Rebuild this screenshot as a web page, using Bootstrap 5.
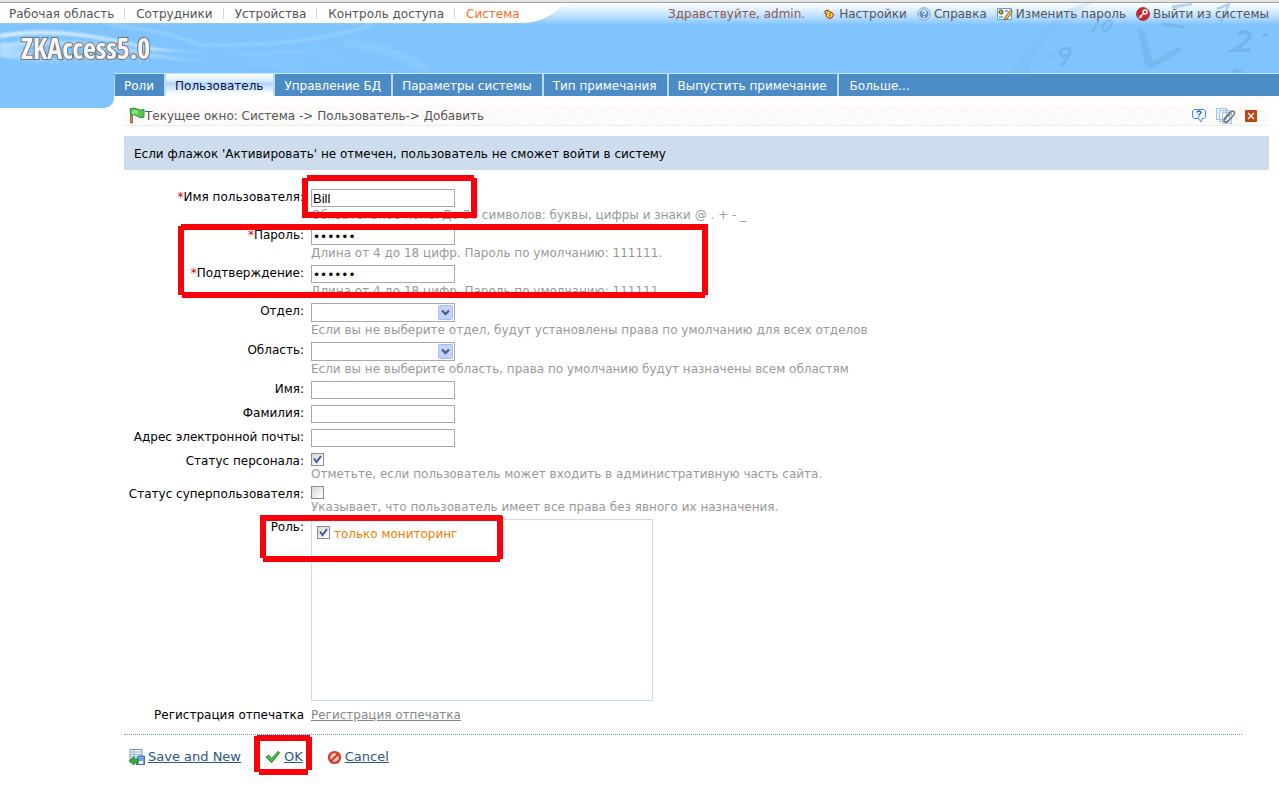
<!DOCTYPE html>
<html lang="ru">
<head>
<meta charset="utf-8">
<meta name="viewport" content="width=device-width, initial-scale=1">
<title>ZKAccess5.0</title>
<link href="https://cdn.jsdelivr.net/npm/bootstrap@5.3.0/dist/css/bootstrap.min.css" rel="stylesheet">
<style>
  body { font: 12px/16px "DejaVu Sans", sans-serif; color: #000; background: #fff; }
  a { color: inherit; text-decoration: none; }
  .chrome-edge { height: 3px; background: #e4e4e4; border-bottom: 1px solid #a0a0a0; }
  .masthead { position: relative; height: 93px; background: linear-gradient(#fff, #c4e3ff 12px, #7fc4ff 22px, #7fc4ff); }
  .masthead > svg { position: absolute; top: 0; }
  .art-waves { left: 0; }
  .art-clock { right: 0; }
  .topbar { position: relative; height: 22px; color: #555; }
  .mainnav { background: #fff; height: 20px; padding-left: 9px; }
  .mainnav a { line-height: 22px; }
  .mainnav li + li::before { content: ""; display: inline-block; width: 1px; height: 11px; background: #d4d4d4; margin: 0 11px 0 10px; vertical-align: -1px; }
  .mainnav .current { color: #f4712a; }
  .usernav { gap: 10px; padding-right: 10px; line-height: 22px; }
  .usernav a { display: flex; align-items: center; gap: 3px; }
  .hello { color: #93584d; margin-right: 8px; }
  .product { position: relative; margin-left: 21px; padding-top: 8px; font: bold 28px/30px "Open Sans Condensed", "Liberation Sans", sans-serif; color: #f6f6f6; -webkit-text-stroke: 2px #777; paint-order: stroke fill; -webkit-box-reflect: below -14px linear-gradient(transparent 55%, rgba(0,0,0,.35)); }
  .tabs-row { position: absolute; left: 0; right: 0; bottom: 0; padding-left: 114px; }
  .tabs { flex: 1; background: #4c8cc6; height: 23px; border-top: 1px solid #c6e6ff; }
  .tabs a { display: block; height: 22px; line-height: 24px; padding: 0 10px 0 9px; color: #fff; border-right: 2px solid #b5dcfb; }
  .tabs li:first-child a { border-left: 1px solid #b5dcfb; border-top-left-radius: 3px; }
  .tabs li:last-child a { border-right: 0; padding-left: 11px; }
  .tabs .current { color: #101040; background: linear-gradient(#fff, #cfe7fb 8px, #a9d4fa 9px, #fff 20px); }
  .notch { width: 114px; height: 12px; background: #7fc4ff; border-bottom-right-radius: 10px; }
  .content-area { margin: -2px 10px 0 124px; }
  .crumbs { height: 20px; color: #555; border-bottom: 1px solid #eee; background: repeating-linear-gradient(45deg, #fff 0 1px, #fbf6f4 1px 2px); padding-left: 5px; padding-right: 12px; }
  .tip { margin-top: 10px; background: #cddded; padding: 10px; height: 34px; }
  .form-body { padding-top: 19px; }
  .entry { display: grid; grid-template-columns: 180px 1fr; column-gap: 7px; margin-bottom: 4px; }
  .entry.tight { margin-bottom: 6px; }
  .entry > label, .entry > .caption { text-align: right; white-space: nowrap; }
  .req { color: #d00; }
  .field { display: block; width: 144px; height: 18px; border: 1px solid #a9a9ab; border-radius: 0; padding: 1px 1px 0; font: 13px/15px "Liberation Sans", sans-serif; color: #000; background: #fff; }
  .field[type=password] { font: 12px/15px "DejaVu Sans", sans-serif; }
  select.field { height: 19px; appearance: none; background: #fff url("data:image/svg+xml,%3Csvg xmlns='http://www.w3.org/2000/svg' width='15' height='15'%3E%3Crect x='.5' y='.5' width='14' height='14' rx='1' fill='%23c3d3fb' stroke='%23aabdf0'/%3E%3Cpath d='M4 5.5 7.5 9 11 5.5' fill='none' stroke='%234d6185' stroke-width='2.4'/%3E%3C/svg%3E") right 1px center no-repeat; }
  .hint { color: #999; }
  .tick { display: block; appearance: none; width: 13px; height: 13px; margin: 0; border: 1px solid #8d8d8d; background: linear-gradient(135deg, #d7d7d4, #fff); }
  .tick:checked { background: url("data:image/svg+xml,%3Csvg xmlns='http://www.w3.org/2000/svg' width='11' height='11'%3E%3Cpath d='M2 4.5 4.5 8 9 2' fill='none' stroke='%23405aa5' stroke-width='2'/%3E%3C/svg%3E") center no-repeat, linear-gradient(135deg, #d7d7d4, #fff); }
  .role-list { width: 342px; height: 182px; border: 1px solid #c5def0; padding: 6px 5px; color: #f08000; }
  .finger-link { color: #888; text-decoration: underline; }
  .rule { margin: 11px 27px 0 0; border-top: 1px dotted #6c93bb; }
  .actions { padding: 12px 5px; color: #2d5685; }
  .actions button { display: flex; align-items: center; gap: 3px; padding: 0; border: 0; background: none; color: inherit; font-size: 13px; line-height: 20px; }
  .actions u { text-underline-offset: 1px; }
  .marker { position: absolute; overflow: visible; pointer-events: none; z-index: 2; fill: none; stroke: #fe000c; stroke-width: 6px; }
  .mark-name { left: 178px; top: -15px; }
  .mark-pass { left: 54px; top: -2px; }
  .mark-role { left: 136px; top: -4px; }
  .mark-ok { left: -11px; top: -13px; }
</style>
</head>
<body>
<div class="chrome-edge"></div>
<header class="masthead">
  <svg class="art-waves" width="440" height="70" viewBox="0 0 440 70" fill="none" aria-hidden="true">
    <defs>
      <linearGradient id="fade"><stop offset="0" stop-color="#fff" stop-opacity=".7"/><stop offset=".5" stop-color="#fff" stop-opacity=".45"/><stop offset="1" stop-color="#fff" stop-opacity="0"/></linearGradient>
      <filter id="soft"><feGaussianBlur stdDeviation="1.2"/></filter>
    </defs>
    <g filter="url(#soft)">
      <path d="M0 31Q60 20 145 43Q240 60 380 41Q260 56 150 47Q60 24 0 35Z" fill="url(#fade)"/>
      <path d="M0 40Q80 32 150 50Q250 72 390 54Q260 68 150 54Q70 36 0 46Z" fill="url(#fade)" opacity=".6"/>
      <path d="M0 46Q20 40 60 60Q30 58 0 54Z" fill="url(#fade)" opacity=".6"/>
      <path d="M110 22Q170 28 200 42Q310 44 370 22" stroke="#fff" stroke-opacity=".16" stroke-width="3"/>
      <path d="M345 40Q395 44 425 66" stroke="#fff" stroke-opacity=".08" stroke-width="8"/>
    </g>
  </svg>
  <svg class="art-clock" width="270" height="70" viewBox="1009 3 270 70" aria-hidden="true">
    <path d="M1011 73Q1040 20 1082 3H1094Q1045 25 1027 73Z" fill="#6faedf" opacity=".15"/>
    <g fill="none" stroke="#659fce" stroke-width="3" opacity=".4">
      <path d="M1049 56h4M1070 52Q1061 60 1060 53Q1062 46 1070 49Q1072 56 1060 66M1099 20 1092 32M1108 21Q1115 19 1110 27Q1104 34 1102 28Q1103 22 1108 21M1217 9 1229 4 1221 22" stroke-width="2.500"/>
      <path d="M1238 34Q1244 30 1250 34Q1252 39 1234 50H1250" stroke-width="4"/><path d="M1262 35h6M1162 24l22 3M1172 7l20-3M1233 70l9 2"/>
    </g>
    <path d="M1137 28 1144 31 1153 61 1180 46 1182 51 1153 68 1146 67Z" fill="#659fce" opacity=".3"/>
  </svg>
  <div class="topbar d-flex justify-content-between">
    <nav class="d-flex">
      <ul class="mainnav list-unstyled d-flex mb-0 text-nowrap">
        <li><a href="#">Рабочая область</a></li><li><a href="#">Сотрудники</a></li><li><a href="#">Устройства</a></li><li><a href="#">Контроль доступа</a></li><li><a href="#" class="current">Система</a></li>
      </ul>
      <svg width="44" height="20" aria-hidden="true"><path d="M0 0H44Q28 20 0 20Z" fill="#fff"/></svg>
    </nav>
    <div class="usernav d-flex text-nowrap">
      <span class="hello">Здравствуйте, admin.</span>
      <a href="#"><svg width="13" height="12" viewBox="0 0 13 12"><path d="M2 3 5 2 6.500 4 9 4.500 10.500 7 9 9.500 6 10.500 3 8 4 6 2 5.500Z" fill="#ffe83b" stroke="#9b2412"/><path d="M4 4h1M6 6h2M6 8h2" stroke="#9b2412"/></svg>Настройки</a>
      <a href="#"><svg width="14" height="14" viewBox="0 0 14 14"><circle cx="7" cy="7" r="6.200" fill="#dcecff" stroke="#7e9cc9"/><circle cx="7" cy="7" r="4.600" fill="#6793cd"/><path d="M5.200 5.500Q5.300 4 7 4T8.800 5.400Q8.800 6.500 7 7.200V8M7 9v1.400" fill="none" stroke="#fff" stroke-width="1.300"/></svg>Справка</a>
      <a href="#"><svg width="16" height="14" viewBox="0 0 16 14"><path d="M.5 1.500h14v11H.5Z" fill="#e9f5ff" stroke="#5b9fdb"/><circle cx="4" cy="5" r="2" fill="#efb52c" stroke="#4b3212"/><path d="M2 10h4M8 4h3" stroke="#3b70b4"/><path d="M8 10.500 13.500 3 15.500 4.500 10 12 7.500 13Z" fill="#ffca4e" stroke="#8b5b25"/></svg>Изменить пароль</a>
      <a href="#"><svg width="14" height="14" viewBox="0 0 14 14"><circle cx="7" cy="7" r="6.500" fill="#c9252b" stroke="#9e4c4c"/><circle cx="9" cy="5" r="2" fill="none" stroke="#fff" stroke-width="1.500"/><path d="M7.500 6.500 3 11M4 8.500l2 2" stroke="#fff" stroke-width="1.400"/></svg>Выйти из системы</a>
    </div>
  </div>
  <div class="product d-inline-block">ZKAccess5.0</div>
  <div class="tabs-row d-flex">
    <ul class="tabs list-unstyled d-flex mb-0 text-nowrap">
      <li><a href="#">Роли</a></li><li><a href="#" class="current">Пользователь</a></li><li><a href="#">Управление БД</a></li><li><a href="#">Параметры системы</a></li><li><a href="#">Тип примечания</a></li><li><a href="#">Выпустить примечание</a></li><li><a href="#">Больше...</a></li>
    </ul>
  </div>
</header>
<div class="notch"></div>
<main class="content-area">
  <div class="crumbs d-flex align-items-center">
    <svg width="16" height="18" viewBox="0 0 16 18" aria-hidden="true"><path d="M1.500 2v14h2V2Z" fill="#c98b52" stroke="#80522d" stroke-width=".7"/><path d="M1 2Q4 0 8 2T15 2.500V10Q11 12 8 9T2 9Z" fill="#55c653" stroke="#268e35"/><path d="M3 4Q6 2 9 4V8Q6 6 3 7Z" fill="#8ce477"/></svg>
    <span class="me-auto">Текущее окно: Система -&gt; Пользователь-&gt; Добавить</span>
    <div class="d-flex align-items-center gap-2">
      <a href="#" aria-label="Справка"><svg width="16" height="16" viewBox="0 0 16 16"><path d="M3 1.500H13L14.500 3V9L13 10.500H11L10 14 7.500 10.500H3L1.500 9V3Z" fill="#eef7ff" stroke="#4b8fd3"/><path d="M6 4.500Q6.500 3 8 3T10 4.500Q10 5.500 8 6.500V7.500M8 8.500v1" fill="none" stroke="#245eae" stroke-width="1.300"/></svg></a>
      <a href="#" aria-label="Вложения"><svg width="22" height="16" viewBox="0 0 22 16"><path d="M1.500.5h10v11h-10ZM4.500 2.500h10v11h-10ZM7.500 4.500h9v11h-9Z" fill="#f0f7ff" stroke="#9bbfe7"/><path d="M9 11 15.500 4Q18 2 19.500 4.500Q20 6 18 8L12.500 13.500Q10.500 15 9 13Q8.500 12 10 10.500L15.500 5.500" fill="none" stroke="#777" stroke-width="1.600"/></svg></a>
      <a href="#" aria-label="Закрыть"><svg width="12" height="12" viewBox="0 0 12 12"><rect width="12" height="12" rx="1" fill="#b94618"/><path d="m3 3 6 6m0-6-6 6" stroke="#fff" stroke-width="1.300"/></svg></a>
    </div>
  </div>
  <div class="tip">Если флажок 'Активировать' не отмечен, пользователь не сможет войти в систему</div>
  <form class="form-body" onsubmit="return false">
    <div class="entry position-relative">
      <label for="user"><span class="req">*</span>Имя пользователя:</label>
      <div><input class="field" id="user" type="text" value="Bill"><div class="hint">Обязательное поле. До 30 символов: буквы, цифры и знаки @ . + - _</div></div>
      <svg class="marker mark-name" width="175" height="44" aria-hidden="true"><path d="M5 4H172M3 4V44M2 41H170M172 4V44"/></svg>
    </div>
    <div class="position-relative">
      <div class="entry">
        <label for="pass"><span class="req">*</span>Пароль:</label>
        <div><input class="field" id="pass" type="password" value="111111"><div class="hint">Длина от 4 до 18 цифр. Пароль по умолчанию: 111111.</div></div>
      </div>
      <div class="entry">
        <label for="pass2"><span class="req">*</span>Подтверждение:</label>
        <div><input class="field" id="pass2" type="password" value="111111"><div class="hint">Длина от 4 до 18 цифр. Пароль по умолчанию: 111111.</div></div>
      </div>
      <svg class="marker mark-pass" width="530" height="74" aria-hidden="true"><path d="M3 2H530M3 1V70M4 70H527M527 1V70"/></svg>
    </div>
    <div class="entry">
      <label for="dept">Отдел:</label>
      <div><select class="field" id="dept"><option></option></select><div class="hint">Если вы не выберите отдел, будут установлены права по умолчанию для всех отделов</div></div>
    </div>
    <div class="entry">
      <label for="area">Область:</label>
      <div><select class="field" id="area"><option></option></select><div class="hint">Если вы не выберите область, права по умолчанию будут назначены всем областям</div></div>
    </div>
    <div class="entry tight"><label for="first">Имя:</label><input class="field" id="first" type="text"></div>
    <div class="entry tight"><label for="last">Фамилия:</label><input class="field" id="last" type="text"></div>
    <div class="entry tight"><label for="mail">Адрес электронной почты:</label><input class="field" id="mail" type="text"></div>
    <div class="entry">
      <label for="staff">Статус персонала:</label>
      <div><input class="tick" id="staff" type="checkbox" checked><div class="hint">Отметьте, если пользователь может входить в административную часть сайта.</div></div>
    </div>
    <div class="entry">
      <label for="super">Статус суперпользователя:</label>
      <div><input class="tick" id="super" type="checkbox"><div class="hint">Указывает, что пользователь имеет все права без явного их назначения.</div></div>
    </div>
    <div class="entry tight position-relative">
      <span class="caption">Роль:</span>
      <div class="role-list"><div class="d-flex gap-1"><input class="tick" id="role" type="checkbox" checked><label for="role">только мониторинг</label></div></div>
      <svg class="marker mark-role" width="243" height="47" aria-hidden="true"><path d="M0 3H242M3 1V43M3 44H240M240 1V44"/></svg>
    </div>
    <div class="entry mb-0"><span class="caption">Регистрация отпечатка</span><span><a href="#" class="finger-link">Регистрация отпечатка</a></span></div>
    <div class="rule"></div>
    <div class="actions d-flex">
      <button type="submit"><svg width="16" height="16" viewBox="0 0 16 16"><path d="M1 .5h12v10H1Z" fill="#eff6fb" stroke="#7594a8"/><path d="M2 3h10M2 5.500h10M2 8h10M5 1v9" stroke="#8eb9d4"/><path d="M9 7h6.500v8.500H7Z" fill="#72a5df" stroke="#3c6dad"/><path d="M10 12h4v3h-4Z" fill="#fff"/><path d="M0 12 5 7.500V10H9V14H5V16Z" fill="#38ad3e" stroke="#16772b" stroke-width=".7"/></svg><u>Save and New</u></button>
      <button type="submit" class="position-relative ms-4"><svg width="16" height="14" viewBox="0 0 17 14"><path d="M1 7 4 5 7 8.500 14 1 15.500 2.500 7 13Z" fill="#4abb43" stroke="#287f2c"/></svg><u>OK</u>
        <svg class="marker mark-ok" width="58" height="40" aria-hidden="true"><path d="M3 4H56M3 2V38M5 38H54M55 3V36"/></svg></button>
      <button type="button" class="ms-4"><svg width="15" height="15" viewBox="0 0 16 16"><circle cx="8" cy="8" r="5.800" fill="#ffd3c8" stroke="#d9382a" stroke-width="2.500"/><path d="m4 12 8-8" stroke="#d9382a" stroke-width="2.200"/></svg><u>Cancel</u></button>
    </div>
  </form>
</main>
<script src="https://cdn.jsdelivr.net/npm/bootstrap@5.3.0/dist/js/bootstrap.bundle.min.js"></script>
</body>
</html>
